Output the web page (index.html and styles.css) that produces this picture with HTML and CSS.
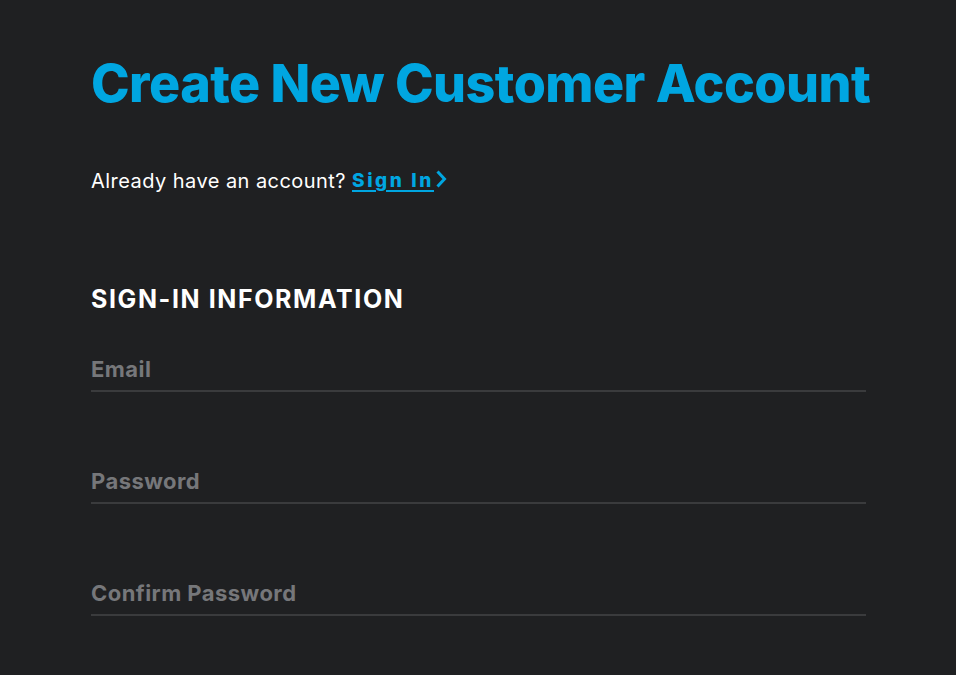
FILE: index.html
```html
<!DOCTYPE html>
<html lang="en">
<head>
<meta charset="utf-8">
<title>Create New Customer Account</title>
<link rel="stylesheet" href="styles.css">
</head>
<body>
<main class="page">
  <h1 class="title">Create New Customer Account</h1>
  <p class="already">Already have an account? <a class="signin" href="#">Sign In</a><svg class="chev" width="12" height="18" viewBox="0 0 12 18"><path d="M2.5 1.5 L9.5 9 L2.5 16.5" fill="none" stroke="#00a6e1" stroke-width="3"/></svg></p>
  <h2 class="section">SIGN-IN INFORMATION</h2>
  <div class="field"><span class="label">Email</span></div>
  <div class="field"><span class="label">Password</span></div>
  <div class="field"><span class="label">Confirm Password</span></div>
</main>
</body>
</html>
```
FILE: styles.css
```css
html, body {
  margin: 0;
  background: #1f2022;
}
body {
  font-family: Inter, "Liberation Sans", sans-serif;
  color: #ffffff;
}
.page {
  width: 775px;
  padding: 56px 0 0 91px;
  display: flex;
  flex-direction: column;
}
.title {
  margin: 0;
  font-size: 52px;
  line-height: 56px;
  font-weight: 800;
  letter-spacing: -0.55px;
  color: #00a6e1;
  white-space: nowrap;
}
.already {
  margin: 57px 0 0;
  font-size: 20px;
  line-height: 24px;
  font-weight: 400;
  letter-spacing: 0.45px;
  display: flex;
  align-items: center;
}
.signin {
  margin-left: 6px;
  color: #00a6e1;
  font-weight: 800;
  font-size: 19px;
  letter-spacing: 2.6px;
  text-decoration: underline;
  text-decoration-thickness: 2px;
  text-underline-offset: 3px;
}
.chev {
  margin-left: 1px;
  margin-top: -4px;
}
.section {
  margin: 91px 0 0;
  font-size: 25px;
  line-height: 30px;
  font-weight: 700;
  letter-spacing: 1.6px;
}
.field {
  height: 46px;
  border-bottom: 2px solid #3a3b3d;
  display: flex;
  align-items: flex-end;
  padding-bottom: 8px;
  box-sizing: border-box;
  margin-top: 32px;
}
.field + .field {
  margin-top: 66px;
}
.label {
  font-size: 22px;
  font-weight: 700;
  letter-spacing: 0.45px;
  color: #76777a;
}
```
